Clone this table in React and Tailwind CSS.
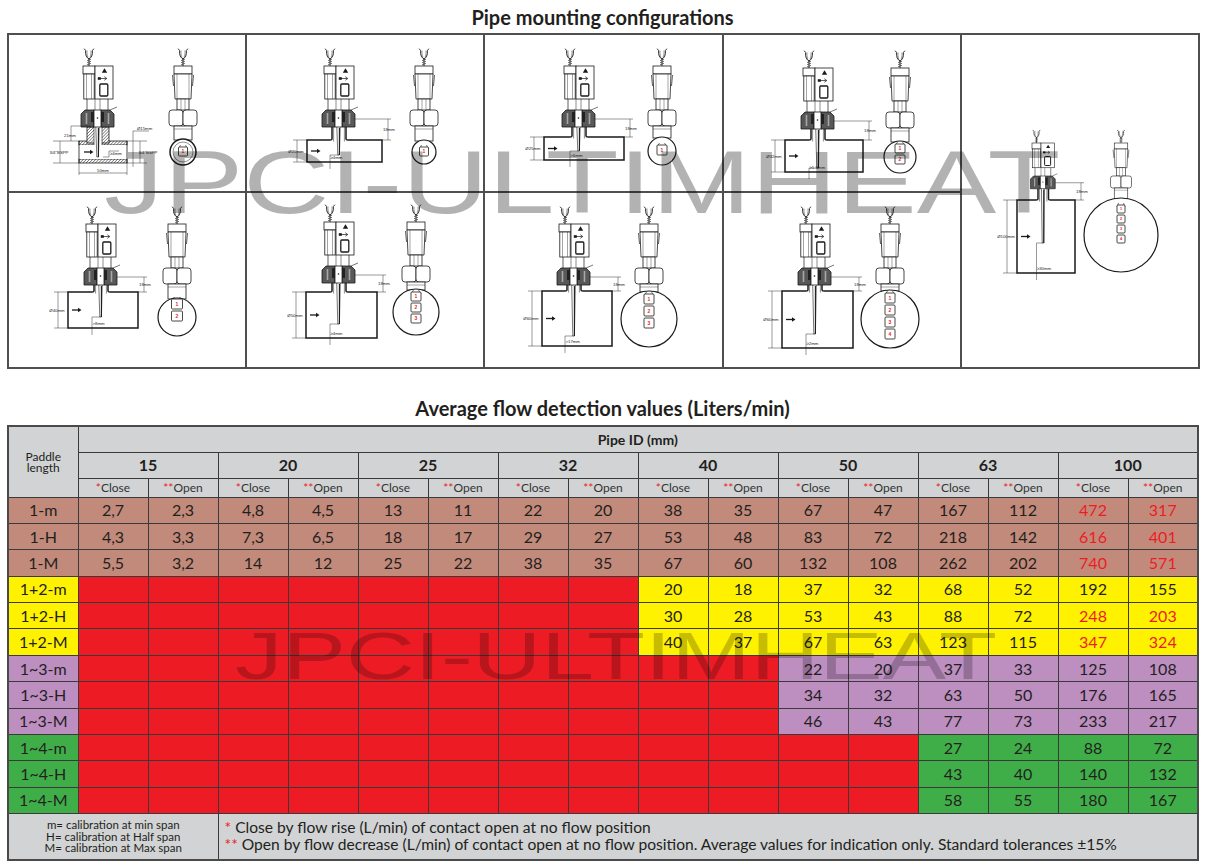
import React from "react";

const K = "#1a1a1a";
const LBL = { fontFamily: "'Liberation Sans', Arial, sans-serif" };

function Fork({ x, y }) {
  return (
    <g fill="none" stroke={K} strokeWidth="0.9" strokeLinecap="round">
      <path d={`M${x},${y} V${y - 7}`} />
      <path
        d={`M${x - 1.6},${y - 1.5} L${x + 1.6},${y - 2.5} M${x - 1.6},${y - 3.5} L${x + 1.6},${y - 4.5} M${x - 1.6},${y - 5.5} L${x + 1.6},${y - 6.5}`}
        strokeWidth="0.6"
      />
      <path d={`M${x},${y - 7} C${x - 2.5},${y - 8} ${x - 3.8},${y - 11} ${x - 3.4},${y - 15.5} L${x - 4.6},${y - 17}`} />
      <path d={`M${x},${y - 7} C${x + 2.5},${y - 8} ${x + 3.8},${y - 11} ${x + 3.4},${y - 15.5} L${x + 4.6},${y - 17}`} />
      <path d={`M${x - 1.2},${y - 9} C${x - 2.2},${y - 11} ${x - 2.2},${y - 13} ${x - 2},${y - 15}`} strokeWidth="0.5" />
      <path d={`M${x + 1.2},${y - 9} C${x + 2.2},${y - 11} ${x + 2.2},${y - 13} ${x + 2},${y - 15}`} strokeWidth="0.5" />
    </g>
  );
}

function SideTop({ x, y, s = 1 }) {
  return (
    <g transform={`translate(${x},${y}) scale(${s})`} stroke={K} strokeWidth="0.8">
      <Fork x={6} y={0} />
      <rect x="0" y="0" width="12" height="8" fill="#fff" />
      <rect x="0.8" y="8" width="10.4" height="25" fill="#fff" />
      <line x1="3.5" y1="8" x2="3.5" y2="33" strokeWidth="0.4" />
      <line x1="8.5" y1="8" x2="8.5" y2="33" strokeWidth="0.4" />
      <rect x="12" y="0" width="18" height="33" fill="#fff" />
      <path d="M21.5,2.2 L24.2,6.8 L18.8,6.8 Z" fill={K} stroke="none" />
      <path d="M15.5,12.5 H23.5 M21.3,10.7 L23.8,12.5 L21.3,14.3" fill="none" strokeWidth="0.7" />
      <rect x="14.8" y="11.2" width="3" height="2.6" fill={K} stroke="none" />
      <rect x="16.8" y="18" width="8" height="12" rx="1" fill="none" strokeWidth="1.3" />
      <path d="M4,33 V44 M25,33 V44" fill="none" strokeWidth="0.7" />
      <path d="M12,33 V44 M17,33 V44" fill="none" strokeWidth="0.5" />
      <path d="M-2,48 L2,44 L11,44 L11,61 L-2,61 Z" fill="#585858" />
      <path d="M18,44 L27,44 L31,48 L31,61 L18,61 Z" fill="#585858" />
      <rect x="11" y="44" width="7" height="17" fill="#fff" />
      <path d="M3.5,47 V58 M25.5,47 V58" stroke="#a8a8a8" strokeWidth="1.6" />
      <rect x="8" y="46" width="3" height="10" fill="#222" stroke="none" />
      <rect x="18" y="46" width="3" height="10" fill="#222" stroke="none" />
      <line x1="27" y1="44" x2="34" y2="41" strokeWidth="0.6" />
      <circle cx="14.5" cy="52" r="0.8" fill={K} stroke="none" />
    </g>
  );
}

function FrontTop({ cx, by, s = 1, neckTo }) {
  const neckEnd = (neckTo - by) / s;
  return (
    <g transform={`translate(${cx},${by}) scale(${s})`} stroke={K} strokeWidth="0.8" fill="#fff">
      <Fork x={0} y={0} />
      <rect x={-9} y={0} width={18} height={8} />
      <path d="M-9,8 L-8,33 H8 L9,8 Z" />
      <path d="M-6,8 V33 M6,8 V33" strokeWidth="0.4" fill="none" />
      <path d="M-10.5,9 L-9.5,20 M10.5,9 L9.5,20" strokeWidth="0.7" fill="none" />
      <rect x={-6} y={33} width={12} height={11} />
      <path d="M-2,33 V44 M2,33 V44" strokeWidth="0.4" fill="none" />
      <rect x={-14} y={44} width={14} height={16} rx={3} />
      <rect x={0} y={44} width={14} height={16} rx={3} />
      <rect x={-9} y={60} width={18} height={Math.max(neckEnd - 60, 1)} />
      <path d="M-9,63 H9" strokeWidth="0.4" fill="none" />
    </g>
  );
}

function Paddles({ cx, top, n, w = 10, h = 9, gap = 2, fs = 4.5 }) {
  return (
    <g>
      <path d={`M${cx - w / 2},${top + 2} L${cx - 2.5},${top - 2} M${cx + w / 2},${top + 2} L${cx + 2.5},${top - 2}`} stroke={K} strokeWidth="0.6" fill="none" />
      {Array.from({ length: n }).map((_, i) => {
        const y = top + i * (h + gap);
        return (
          <g key={i}>
            <rect x={cx - w / 2} y={y} width={w} height={h} rx={1} fill="#fff" stroke={K} strokeWidth="0.8" />
            <text x={cx} y={y + h / 2 + fs * 0.36} fontSize={fs} fill="#e31e24" textAnchor="middle" fontWeight="bold" style={LBL}>
              {i + 1}
            </text>
          </g>
        );
      })}
    </g>
  );
}

function FrontView({ cx, by, cy, r, n, s = 1, w = 10, h = 9, gap = 2, ptop, ring = false }) {
  return (
    <g>
      <FrontTop cx={cx} by={by} s={s} neckTo={cy - r + 1} />
      <circle cx={cx} cy={cy} r={r} fill="#fff" stroke={K} strokeWidth={ring ? 1.5 : 1.2} />
      {ring && <circle cx={cx} cy={cy} r={r - 3} fill="none" stroke="#444" strokeWidth="0.6" />}
      <Paddles cx={cx} top={ptop ?? cy - r + 2} n={n} w={w} h={h} gap={gap} fs={4.5 * s + 0.5} />
    </g>
  );
}

function SideAssembly({ bx, by, s = 1, x1, x2, y1, y2, dia, gap, pEnd }) {
  const nl = bx + 8 * s;
  const nr = bx + 22 * s;
  const nb = by + 61 * s;
  const px = bx + 14.5 * s;
  const mid = (y1 + y2) / 2;
  const dimTop = by + 53 * s;
  return (
    <g>
      <path
        d={`M${px - 2 * s},${by + 52 * s} L${px - 0.7},${pEnd} H${px + 0.9} L${px + 2 * s},${by + 52 * s}`}
        fill="#fff"
        stroke={K}
        strokeWidth="0.6"
      />
      <line x1={px + 0.9} y1={by + 62 * s} x2={px + 0.9} y2={pEnd} stroke={K} strokeWidth="1.1" />
      <path
        d={`M${nl},${nb} V${y1 - 1} Q${nl},${y1} ${nl - 2},${y1} H${x1} V${y2} H${x2} V${y1} H${nr + 2} Q${nr},${y1} ${nr},${y1 - 1} V${nb}`}
        fill="none"
        stroke={K}
        strokeWidth="1.5"
      />
      <path d={`M${nl + 1.6},${nb} V${y1 + 1.5} M${nr - 1.6},${nb} V${y1 + 1.5}`} stroke={K} strokeWidth="0.5" fill="none" />
      <SideTop x={bx} y={by} s={s} />
      <path
        d={`M${x1 - 14},${y1} H${x1} M${x1 - 14},${y2} H${x1} M${x1 - 10},${y1} V${y2}`}
        stroke={K}
        strokeWidth="0.45"
        fill="none"
      />
      <text x={x1 - 11} y={mid + 1.5} fontSize="4.3" textAnchor="middle" fill="#222" style={LBL}>
        {dia}
      </text>
      <path d={`M${x1 + 4},${mid} H${x1 + 10}`} stroke={K} strokeWidth="1.3" />
      <path d={`M${x1 + 10},${mid - 2.2} L${x1 + 13.5},${mid} L${x1 + 10},${mid + 2.2} Z`} fill={K} />
      <path
        d={`M${bx + 31 * s},${dimTop} H${x2 + 9} M${x2},${y1} H${x2 + 9} M${x2 + 6},${dimTop} V${y1}`}
        stroke={K}
        strokeWidth="0.45"
        fill="none"
      />
      <text x={x2 + 1} y={(dimTop + y1) / 2 + 1.5} fontSize="4.3" fill="#222" style={LBL}>
        18mm
      </text>
      <path d={`M${bx + 6 * s},${y2 + 7} V${pEnd} H${px}`} stroke={K} strokeWidth="0.45" fill="none" />
      <text x={bx + 6.5 * s} y={y2 - 3} fontSize="4.3" fill="#222" style={LBL}>
        {gap}
      </text>
    </g>
  );
}

function TFitting() {
  const bx = 76;
  const by = 33;
  const px = bx + 14.5;
  return (
    <g>
      <defs>
        <pattern id="hatchT" width="2.2" height="2.2" patternUnits="userSpaceOnUse" patternTransform="rotate(45)">
          <rect width="2.2" height="2.2" fill="#fff" />
          <line x1="0" y1="0" x2="0" y2="2.2" stroke="#333" strokeWidth="1" />
        </pattern>
      </defs>
      <rect x="72" y="108" width="48" height="4" fill="url(#hatchT)" stroke={K} strokeWidth="0.8" />
      <rect x="72" y="126" width="48" height="4" fill="url(#hatchT)" stroke={K} strokeWidth="0.8" />
      <rect x="72" y="112" width="48" height="14" fill="#fff" stroke="none" />
      <path d="M72,108 V130 M120,108 V130" stroke={K} strokeWidth="0.8" />
      <rect x={bx + 4} y="94" width="22" height="16" fill="url(#hatchT)" stroke={K} strokeWidth="0.8" />
      <rect x={bx + 11} y="93" width="8" height="20" fill="#fff" stroke="none" />
      <path d={`M${bx + 11},94 V112 M${bx + 19},94 V112`} stroke={K} strokeWidth="0.6" />
      <path d={`M${px - 2},85 L${px - 0.7},124 H${px + 0.9} L${px + 2},85`} fill="#fff" stroke={K} strokeWidth="0.6" />
      <line x1={px + 0.9} y1="95" x2={px + 0.9} y2="124" stroke={K} strokeWidth="1.1" />
      <SideTop x={bx} y={by} />
      <path d="M64,93 H84 M64,93 V108" stroke={K} strokeWidth="0.45" fill="none" />
      <text x="57" y="104" fontSize="4.3" fill="#222" style={LBL}>21mm</text>
      <path d="M46,108 H72 M46,130 H72 M53,108 V130" stroke={K} strokeWidth="0.45" fill="none" />
      <text x="52" y="121" fontSize="4.3" fill="#222" textAnchor="middle" style={LBL}>3/4"BSPP</text>
      <path d="M120,108 H140 M120,130 H140 M133,108 V130" stroke={K} strokeWidth="0.45" fill="none" />
      <text x="141" y="121" fontSize="4.3" fill="#222" textAnchor="middle" style={LBL}>3/4"BSPP</text>
      <path d="M126,98 H142 M126,98 V134" stroke={K} strokeWidth="0.45" fill="none" />
      <text x="130" y="96.5" fontSize="4.3" fill="#222" style={LBL}>Ø15mm</text>
      <path d="M72,130 V142 M120,130 V142 M72,140 H120" stroke={K} strokeWidth="0.45" fill="none" />
      <text x="96" y="138.5" fontSize="4.3" fill="#222" textAnchor="middle" style={LBL}>50mm</text>
      <path d="M102,124 H96 M102,124 V118 H112" stroke={K} strokeWidth="0.45" fill="none" />
      <text x="103" y="122" fontSize="4.3" fill="#222" style={LBL}>≥4mm</text>
      <path d="M77,119 H83" stroke={K} strokeWidth="1.3" />
      <path d="M83,116.8 L86.5,119 L83,121.2 Z" fill={K} />
    </g>
  );
}

function Cell({ h, children, className = "" }) {
  return (
    <div className={"bg-white overflow-hidden " + className}>
      <svg width="100%" height={h} viewBox={`2 2 236 ${h}`} preserveAspectRatio="xMinYMin meet">
        {children}
      </svg>
    </div>
  );
}

const BG = {
  brown: "bg-[#c28a7a]",
  yellow: "bg-[#fff200]",
  purple: "bg-[#bd8ec0]",
  green: "bg-[#3fae49]",
  red: "bg-[#ed1c24]",
};

const ROWS = [
  { l: "1-m", c: "brown", start: 0, red: 14, v: ["2,7", "2,3", "4,8", "4,5", "13", "11", "22", "20", "38", "35", "67", "47", "167", "112", "472", "317"] },
  { l: "1-H", c: "brown", start: 0, red: 14, v: ["4,3", "3,3", "7,3", "6,5", "18", "17", "29", "27", "53", "48", "83", "72", "218", "142", "616", "401"] },
  { l: "1-M", c: "brown", start: 0, red: 14, v: ["5,5", "3,2", "14", "12", "25", "22", "38", "35", "67", "60", "132", "108", "262", "202", "740", "571"] },
  { l: "1+2-m", c: "yellow", start: 8, red: 99, v: ["20", "18", "37", "32", "68", "52", "192", "155"] },
  { l: "1+2-H", c: "yellow", start: 8, red: 14, v: ["30", "28", "53", "43", "88", "72", "248", "203"] },
  { l: "1+2-M", c: "yellow", start: 8, red: 14, v: ["40", "37", "67", "63", "123", "115", "347", "324"] },
  { l: "1~3-m", c: "purple", start: 10, red: 99, v: ["22", "20", "37", "33", "125", "108"] },
  { l: "1~3-H", c: "purple", start: 10, red: 99, v: ["34", "32", "63", "50", "176", "165"] },
  { l: "1~3-M", c: "purple", start: 10, red: 99, v: ["46", "43", "77", "73", "233", "217"] },
  { l: "1~4-m", c: "green", start: 12, red: 99, v: ["27", "24", "88", "72"] },
  { l: "1~4-H", c: "green", start: 12, red: 99, v: ["43", "40", "140", "132"] },
  { l: "1~4-M", c: "green", start: 12, red: 99, v: ["58", "55", "180", "167"] },
];

const SIZES = ["15", "20", "25", "32", "40", "50", "63", "100"];
const TD = "border border-[#3a3a3a] text-center p-0";

export default function App() {
  return (
    <div className="relative w-[1205px] h-[868px] bg-white overflow-hidden font-[Lato,sans-serif] text-[#231f20]">
      <div className="h-[33px] flex items-center justify-center text-[20px] font-bold leading-none">
        Pipe mounting configurations
      </div>

      <div className="ml-[7px] w-[1193px] grid grid-cols-5 grid-rows-[156px_174px] gap-[2px] bg-[#4f4f4f] p-[2px]">
        <Cell h={156}>
          <TFitting />
          <FrontView cx={176} by={33} cy={119} r={13} n={1} ring w={9} h={9} ptop={114} />
        </Cell>
        <Cell h={156}>
          <SideAssembly bx={79} by={33} x1={62} x2={137} y1={107} y2={129} dia="Ø20mm" gap="≥4mm" pEnd={122} />
          <FrontView cx={179} by={33} cy={119} r={12} n={1} w={9} h={9} ptop={114} />
        </Cell>
        <Cell h={156}>
          <SideAssembly bx={81} by={33} x1={61} x2={141} y1={104} y2={127} dia="Ø25mm" gap=">6mm" pEnd={118} />
          <FrontView cx={179} by={33} cy={118} r={14} n={1} w={10} h={10} ptop={112} />
        </Cell>
        <Cell h={156}>
          <SideAssembly bx={81} by={35} x1={63} x2={141} y1={107} y2={139} dia="Ø32mm" gap="≥1.5mm" pEnd={135} />
          <FrontView cx={178} by={35} cy={124} r={16} n={2} w={10} h={9} ptop={111} />
        </Cell>
        <Cell h={332} className="row-span-2">
          <SideAssembly bx={72} by={110} s={0.75} x1={57} x2={115} y1={167} y2={240} dia="Ø100mm" gap="≥30mm" pEnd={210} />
          <FrontView cx={161} by={110} s={0.75} cy={202} r={37} n={4} w={8} h={8} gap={2} ptop={172} />
        </Cell>
        <Cell h={174}>
          <SideAssembly bx={79} by={33} x1={61} x2={131} y1={101} y2={137} dia="Ø40mm" gap=">8mm" pEnd={126} />
          <FrontView cx={170} by={33} cy={126} r={19} n={2} w={11} h={10} ptop={108} />
        </Cell>
        <Cell h={174}>
          <SideAssembly bx={79} by={31} x1={61} x2={132} y1={101} y2={147} dia="Ø50mm" gap="≥4mm" pEnd={133} />
          <FrontView cx={171} by={31} cy={121} r={23} n={3} w={10} h={9} ptop={101} />
        </Cell>
        <Cell h={174}>
          <SideAssembly bx={76} by={33} x1={59} x2={129} y1={100} y2={155} dia="Ø60mm" gap=">17mm" pEnd={145} />
          <FrontView cx={166} by={33} cy={128} r={28} n={3} w={10} h={10} ptop={103} />
        </Cell>
        <Cell h={174}>
          <SideAssembly bx={78} by={33} x1={60} x2={131} y1={100} y2={157} dia="Ø60mm" gap="≥2mm" pEnd={143} />
          <FrontView cx={168} by={33} cy={128} r={29} n={4} w={10} h={10} ptop={102} />
        </Cell>
      </div>

      <div className="mt-[27px] mb-[5px] h-[24px] flex items-center justify-center text-[20px] font-bold leading-none">
        Average flow detection values (Liters/min)
      </div>

      <table className="ml-[7px] w-[1192px] table-fixed border-collapse border-2 border-[#4a4a4a]">
        <colgroup>
          <col className="w-[70px]" />
          {Array.from({ length: 16 }).map((_, i) => (
            <col key={i} />
          ))}
        </colgroup>
        <tbody>
          <tr className="h-[26px] bg-[#d1d3d4]">
            <td rowSpan={3} className={TD + " text-[12px] leading-[11px]"}>
              Paddle
              <br />
              length
            </td>
            <td colSpan={16} className={TD + " text-[14px] font-bold"}>
              Pipe ID (mm)
            </td>
          </tr>
          <tr className="h-[26px] bg-[#d1d3d4]">
            {SIZES.map((s) => (
              <td key={s} colSpan={2} className={TD + " text-[16px] font-bold"}>
                {s}
              </td>
            ))}
          </tr>
          <tr className="h-[19px] bg-[#d1d3d4]">
            {SIZES.map((s) => (
              <React.Fragment key={s}>
                <td className={TD + " text-[12px] leading-none text-[#333]"}>
                  <span className="text-[#ed1c24]">*</span>Close
                </td>
                <td className={TD + " text-[12px] leading-none text-[#333]"}>
                  <span className="text-[#ed1c24]">**</span>Open
                </td>
              </React.Fragment>
            ))}
          </tr>
          {ROWS.map((r) => (
            <tr key={r.l} className="h-[26.4px]">
              <td className={TD + " text-[16px] " + BG[r.c]}>{r.l}</td>
              {Array.from({ length: 16 }).map((_, i) => {
                if (i < r.start) return <td key={i} className={TD + " " + BG.red}></td>;
                const val = r.v[i - r.start];
                return (
                  <td key={i} className={TD + " text-[16px] " + BG[r.c] + (i >= r.red ? " text-[#ed1c24]" : "")}>
                    {val}
                  </td>
                );
              })}
            </tr>
          ))}
          <tr className="h-[46px] bg-[#d1d3d4]">
            <td colSpan={3} className={TD + " text-[11.5px] leading-[11.5px]"}>
              m= calibration at min span
              <br />
              H= calibration at Half span
              <br />
              M= calibration at Max span
            </td>
            <td colSpan={14} className={TD + " text-left pl-[6px] text-[15.6px] leading-[17px]"}>
              <div>
                <span className="text-[#ed1c24]">*</span> Close by flow rise (L/min) of contact open at no flow position
              </div>
              <div>
                <span className="text-[#ed1c24]">**</span> Open by flow decrease (L/min) of contact open at no flow position. Average values for indication only. Standard tolerances ±15%
              </div>
            </td>
          </tr>
        </tbody>
      </table>

      <div className="absolute left-[104px] top-[138px] text-[89px] leading-none font-['Liberation_Sans',Arial,sans-serif] text-black/30 origin-left scale-x-[1.34] whitespace-nowrap pointer-events-none">
        JPCI-ULTIMHEAT
      </div>
      <div className="absolute left-[235px] top-[623px] text-[66px] leading-none font-['Liberation_Sans',Arial,sans-serif] text-black/[0.22] origin-left scale-x-[1.44] whitespace-nowrap pointer-events-none">
        JPCI-ULTIMHEAT
      </div>
    </div>
  );
}
